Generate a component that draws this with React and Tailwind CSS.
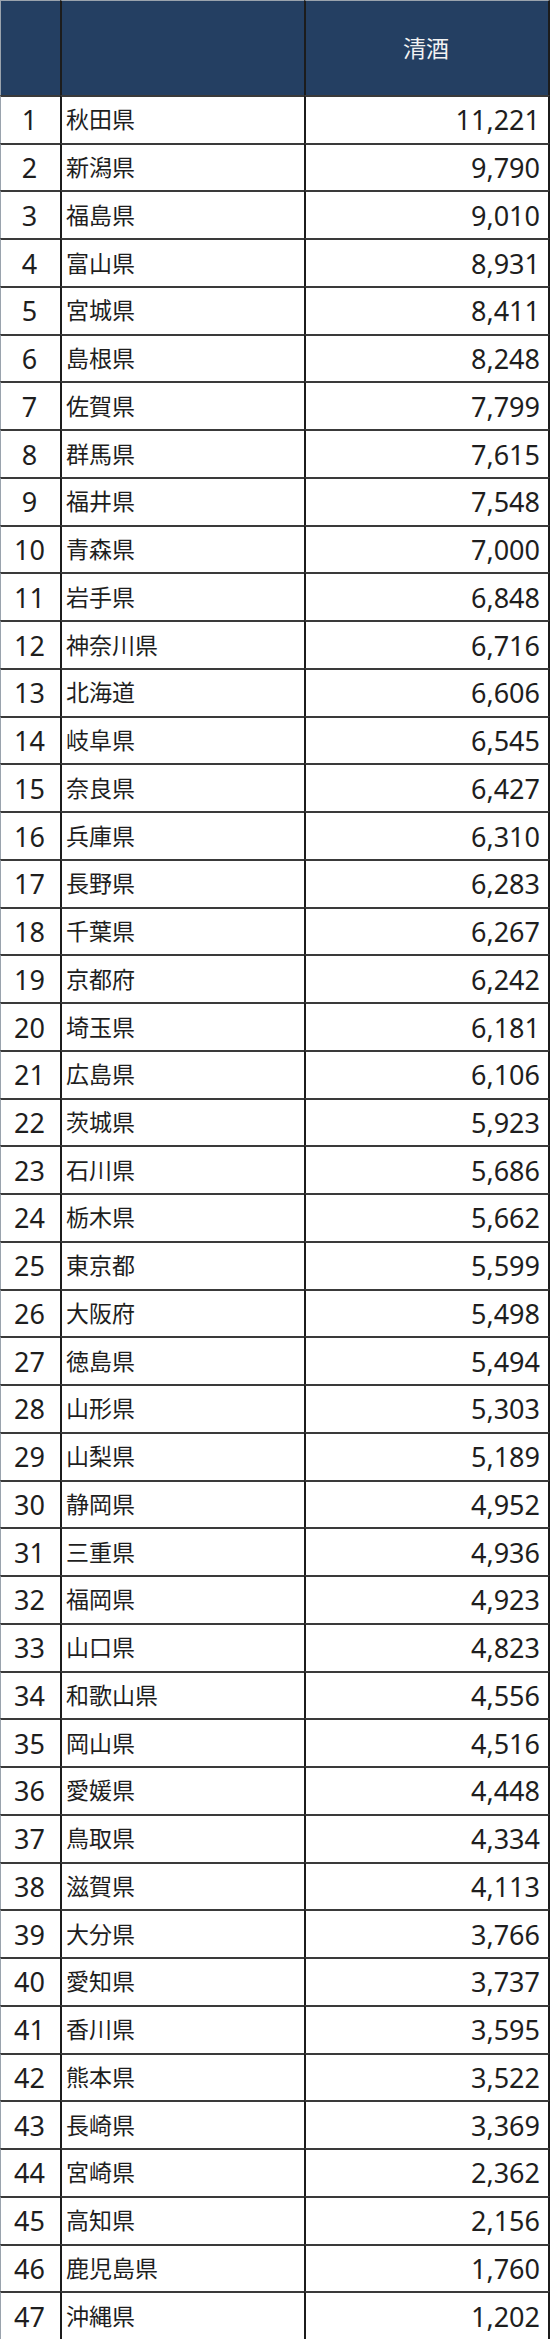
const rows = [
  ['秋田県', '11,221'],
  ['新潟県', '9,790'],
  ['福島県', '9,010'],
  ['富山県', '8,931'],
  ['宮城県', '8,411'],
  ['島根県', '8,248'],
  ['佐賀県', '7,799'],
  ['群馬県', '7,615'],
  ['福井県', '7,548'],
  ['青森県', '7,000'],
  ['岩手県', '6,848'],
  ['神奈川県', '6,716'],
  ['北海道', '6,606'],
  ['岐阜県', '6,545'],
  ['奈良県', '6,427'],
  ['兵庫県', '6,310'],
  ['長野県', '6,283'],
  ['千葉県', '6,267'],
  ['京都府', '6,242'],
  ['埼玉県', '6,181'],
  ['広島県', '6,106'],
  ['茨城県', '5,923'],
  ['石川県', '5,686'],
  ['栃木県', '5,662'],
  ['東京都', '5,599'],
  ['大阪府', '5,498'],
  ['徳島県', '5,494'],
  ['山形県', '5,303'],
  ['山梨県', '5,189'],
  ['静岡県', '4,952'],
  ['三重県', '4,936'],
  ['福岡県', '4,923'],
  ['山口県', '4,823'],
  ['和歌山県', '4,556'],
  ['岡山県', '4,516'],
  ['愛媛県', '4,448'],
  ['鳥取県', '4,334'],
  ['滋賀県', '4,113'],
  ['大分県', '3,766'],
  ['愛知県', '3,737'],
  ['香川県', '3,595'],
  ['熊本県', '3,522'],
  ['長崎県', '3,369'],
  ['宮崎県', '2,362'],
  ['高知県', '2,156'],
  ['鹿児島県', '1,760'],
  ['沖縄県', '1,202'],
];

function App() {
  return (
    <div
      className="grid h-[2339px] w-[550px] grid-cols-[60px_244px_246px] grid-rows-[95px_repeat(47,minmax(0,1fr))] bg-white text-[27px] leading-none text-[#1e1e1e]"
      style={{ fontFamily: '"Noto Sans", "Noto Sans CJK JP", sans-serif' }}
    >
      <div className="border-t border-l border-[#9aa3ad] bg-[#243f62]" />
      <div className="border-t border-l-2 border-[#9aa3ad] border-l-[#1c1c1c] bg-[#243f62]" />
      <div className="flex items-center justify-center border-t border-r-2 border-l-2 border-[#9aa3ad] border-r-[#1c1c1c] border-l-[#1c1c1c] bg-[#243f62] pr-[2px] text-[23px] text-[#f2f2f2]">
        清酒
      </div>
      {rows.map(([name, value], i) => (
        <Row key={name} rank={i + 1} name={name} value={value} />
      ))}
    </div>
  );
}

function Row({ rank, name, value }) {
  return (
    <>
      <div className="flex items-center justify-center border-t-2 border-l border-[#3a3a3a] border-l-[#9aa3ad] pr-[2px]">
        {rank}
      </div>
      <div className="flex items-center border-t-2 border-l-2 border-[#3a3a3a] border-l-[#1c1c1c] pl-[4px] text-[23px]">
        {name}
      </div>
      <div className="flex items-center justify-end border-t-2 border-r-2 border-l-2 border-[#3a3a3a] border-r-[#1c1c1c] border-l-[#1c1c1c] pr-[8px]">
        {value}
      </div>
    </>
  );
}

export default App;
